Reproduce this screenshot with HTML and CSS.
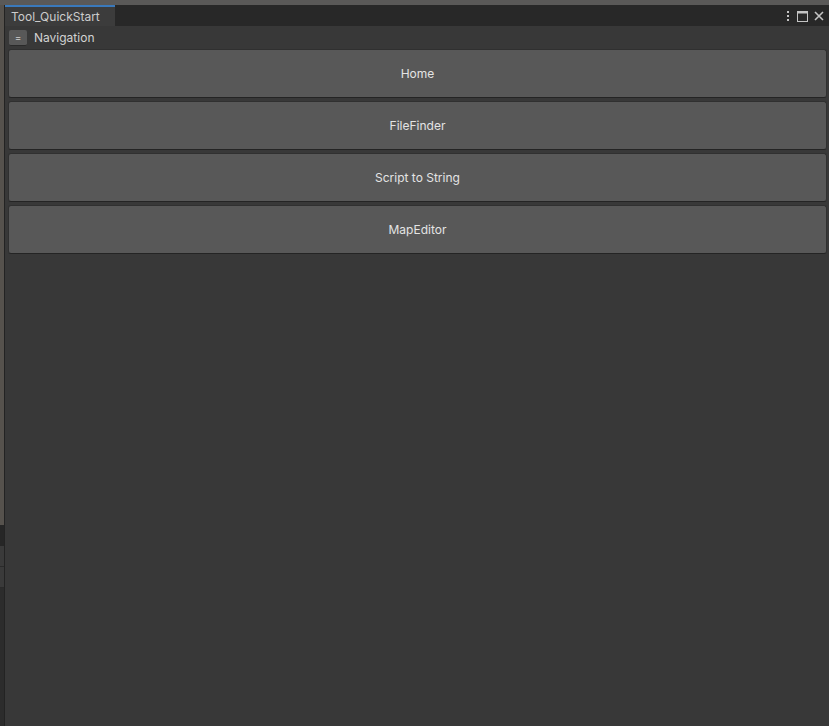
FILE: index.html
```html
<!DOCTYPE html>
<html>
<head>
<meta charset="utf-8">
<link rel="stylesheet" href="styles.css">
</head>
<body>
<div class="screen">
  <div class="topstrip"></div>
  <div class="main">
    <div class="side">
      <div class="seg seg-a"></div>
      <div class="seg seg-b"></div>
      <div class="seg seg-c"></div>
      <div class="seg seg-d"></div>
      <div class="seg seg-e"></div>
    </div>
    <div class="window">
      <div class="tabbar">
        <div class="tab">Tool_QuickStart</div>
        <div class="tabicons">
          <svg class="ico" width="6" height="12" viewBox="0 0 6 12"><rect x="2" y="1" width="2" height="2" fill="#c4c4c4"/><rect x="2" y="5" width="2" height="2" fill="#c4c4c4"/><rect x="2" y="9" width="2" height="2" fill="#c4c4c4"/></svg>
          <svg class="ico" width="11" height="11" viewBox="0 0 11 11"><rect x="0.5" y="0.5" width="10" height="10" fill="none" stroke="#c4c4c4"/><rect x="0.5" y="0.5" width="10" height="2" fill="#c4c4c4"/></svg>
          <svg class="ico" width="10" height="10" viewBox="0 0 10 10"><path d="M1 1 L9 9 M9 1 L1 9" stroke="#c4c4c4" stroke-width="1.6"/></svg>
        </div>
      </div>
      <div class="content">
        <div class="toolbar">
          <div class="menubtn">=</div>
          <span class="navlabel">Navigation</span>
        </div>
        <div class="buttons">
          <div class="btn">Home</div>
          <div class="btn">FileFinder</div>
          <div class="btn">Script to String</div>
          <div class="btn">MapEditor</div>
        </div>
      </div>
    </div>
  </div>
</div>
</body>
</html>
```
FILE: styles.css
```css
* { box-sizing: border-box; }
html, body { margin: 0; padding: 0; }
body {
  width: 829px;
  height: 726px;
  overflow: hidden;
  font-family: Inter, "Noto Sans", sans-serif;
  font-size: 12px;
  background: #383838;
}
.screen { display: flex; flex-direction: column; height: 726px; }
.topstrip { height: 5px; background: #5a5958; flex: none; }
.main { flex: 1; display: flex; min-height: 0; }
.side { width: 4px; flex: none; display: flex; flex-direction: column; }
.seg-a { height: 520px; background: #56524d; }
.seg-b { height: 21px; background: #262626; }
.seg-c { height: 21px; background: #3a3a3a; border-bottom: 1px solid #2a2a2a; }
.seg-d { height: 21px; background: #3a3a3a; border-bottom: 1px solid #2a2a2a; }
.seg-e { flex: 1; background: #2c2c2c; }
.window { flex: 1; display: flex; flex-direction: column; border-left: 1px solid #232323; }
.tabbar {
  height: 21px;
  flex: none;
  background: #282828;
  display: flex;
  align-items: stretch;
}
.tab {
  width: 110px;
  background: #3c3c3c;
  border-top: 2px solid #3a79bb;
  color: #cccccc;
  padding: 2px 0 0 6px;
  line-height: 15px;
  font-size: 12px;
}
.tabicons {
  margin-left: auto;
  display: flex;
  align-items: center;
  gap: 6px;
  padding-right: 5px;
  padding-top: 1px;
}
.ico { display: block; }
.content { flex: 1; background: #383838; display: flex; flex-direction: column; }
.toolbar {
  height: 23px;
  display: flex;
  align-items: center;
  padding-left: 4px;
  gap: 7px;
}
.menubtn {
  width: 18px;
  height: 16px;
  background: #585858;
  border-radius: 2px;
  border-bottom: 1px solid #2a2a2a;
  color: #d0d0d0;
  font-size: 10px;
  line-height: 14px;
  text-align: center;
}
.navlabel { color: #d2d2d2; font-size: 12px; }
.buttons {
  display: flex;
  flex-direction: column;
  gap: 4px;
  padding: 0 2px 0 3px;
}
.btn {
  height: 49px;
  background: #585858;
  border: 1px solid #303030;
  border-bottom-color: #242424;
  border-radius: 3px;
  color: #e4e4e4;
  display: flex;
  align-items: center;
  justify-content: center;
  font-size: 12px;
}
.btn + .btn { margin-top: -1px; }
```
